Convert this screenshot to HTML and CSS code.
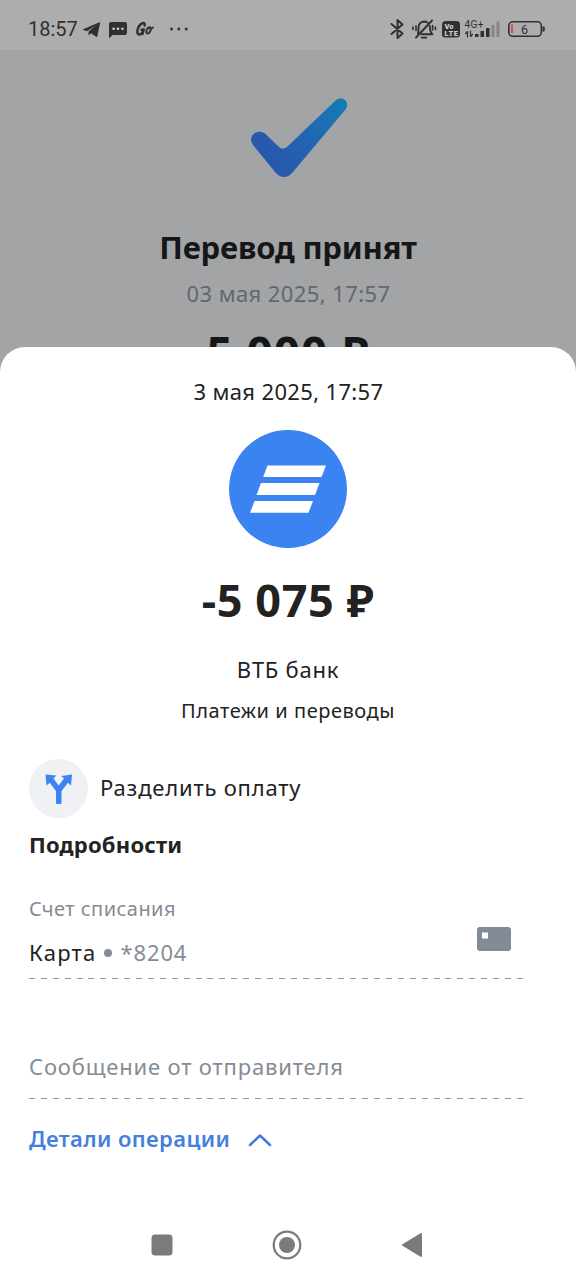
FILE: index.html
```html
<!DOCTYPE html>
<html lang="ru">
<head>
<meta charset="utf-8">
<title>Перевод принят</title>
<link rel="stylesheet" href="styles.css">
</head>
<body>
<div class="phone">
  <header class="status">
    <span class="clock">18:57</span>
    <svg class="status-left" width="110" height="24" viewBox="82 17 110 24">
      <path d="M82.5 29.5 L99.5 22.3 Q100.3 22 100.1 23 L97.3 36.3 Q97 37.5 96 36.8 L91 33.2 L88.5 35.6 L88.6 31.5 L95.5 25.8 L86.8 31.2 Z"/>
      <path d="M111 22 H125 Q127 22 127 24 V33 Q127 35 125 35 H112.5 L109 38.3 V24 Q109 22 111 22 Z"/>
      <g class="hole"><circle cx="113.6" cy="28.8" r="1.3"/><circle cx="118" cy="28.8" r="1.3"/><circle cx="122.4" cy="28.8" r="1.3"/></g>
      <path class="line" stroke-width="2.4" d="M144.5 25.5 Q145.5 22.5 142.5 23.2 Q138.5 25 137.4 30.5 Q137 35 140 34.5 Q142.5 33.5 143.8 29.5 L141.5 29.8 M143.8 29.5 L142.5 34"/>
      <path class="line" stroke-width="1.9" d="M149 27.500 Q146.5 28.5 146.300 32 Q146.5 34.5 149 33 Q151.5 30.5 150.5 28 Q150 26.800 149 27.5 M150.700 29 L153 27.5"/>
      <circle cx="171.5" cy="29" r="1.5"/><circle cx="178.8" cy="29" r="1.5"/><circle cx="186.2" cy="29" r="1.5"/>
    </svg>
    <svg class="status-right" width="160" height="26" viewBox="388 16 160 26">
      <path class="line" stroke-width="2" d="M391.5 24 L402.5 33.5 L397.5 38 V20 L402.5 24.5 L391.5 34"/>
      <g class="line" stroke-width="1.9"><path d="M416 37.5 L432 20.5 M418 33.5 Q418.5 32 418.5 28 Q418.5 22 424 21.5 Q426 21.5 427.5 22.5 M429.8 26 Q429.8 32 432.5 34.2 H421.5"/><path d="M421.5 37.6 H426.5 M416 26 V30.5 M412.9 27 V29.5 M432.6 25.5 V30 M435.4 27 V29.5" stroke-width="1.6"/></g>
      <rect x="442" y="21" width="18" height="16.5" rx="3.5"/>
      <text class="volte" x="444.5" y="29" textLength="9">Vo</text><text class="volte" x="444.5" y="35.5" textLength="13.5">LTE</text>
      <text class="net" x="464.5" y="28" textLength="19">4G+</text>
      <path class="line" stroke-width="1.2" d="M467.5 37 V31.5 L465.5 33.5 M470.5 31 V36.5 L472.5 34.5"/>
      <path d="M475 34 h3.5 v3 h-3.5z M480.5 31 h3.5 v6 h-3.5z M486 28 h3.5 v9 h-3.5z"/>
      <path class="dim" d="M491.5 25 h3 v12 h-3z M496.5 21.5 h3 v15.5 h-3z"/>
      <rect class="line" x="508.8" y="21.8" width="32.5" height="14.5" rx="4" stroke-width="1.6"/>
      <path d="M542.5 26.5 h1.2 q1 0 1 1 v3 q0 1 -1 1 h-1.2z"/>
      <rect class="low" x="511" y="24.5" width="2" height="8.5"/>
      <text class="pct" x="521" y="33.5">6</text>
    </svg>
  </header>
  <main class="receipt">
    <svg class="check" width="98" height="82" viewBox="250 97 98 82">
      <defs><linearGradient id="g" x1="251" y1="160" x2="347" y2="105" gradientUnits="userSpaceOnUse"><stop offset="0.15" stop-color="#2858ad"/><stop offset="0.55" stop-color="#2265b2"/><stop offset="1" stop-color="#147db3"/></linearGradient></defs>
      <path fill="url(#g)" d="M253 145 C247 137 256 128 265 133.5 L278 146 Q282.5 151.5 288 146 L335.5 100.5 C342 95 351 102 345.5 109.5 L292.5 172.5 Q284 181.5 275.5 172.5 Z"/>
    </svg>
    <h1 class="title">Перевод принят</h1>
    <p class="when">03 мая 2025, 17:57</p>
    <p class="sum">5 000 ₽</p>
  </main>
  <section class="sheet">
    <p class="date">3 мая 2025, 17:57</p>
    <svg class="logo" width="118" height="118" viewBox="229 430 118 118">
      <circle cx="288" cy="489" r="59" fill="#3b83f1"/>
      <path fill="#fff" d="M267.5 465.5 H326 L321.5 477 H263.2Z M261 483 H319.5 L315 495 H256.5Z M254.5 501 H313 L308.5 512.7 H250Z"/>
    </svg>
    <p class="amount">-5 075 ₽</p>
    <p class="bank">ВТБ банк</p>
    <p class="category">Платежи и переводы</p>
    <div class="split">
      <span class="split-icon"><svg width="30" height="32" viewBox="44 772 30 32"><path fill="#3b83f1" d="M45.5 773.5 L56.3 774.5 L53.5 777.5 L58.7 784.5 L64 777.5 L61.3 775 L72 773.5 L71 784.5 L68 781.7 L61.5 790 V802 Q61.5 803 60.5 803 H57 Q56 803 56 802 V790 L49.8 781.7 L46.5 784.5Z"/></svg></span>
      <span class="split-label">Разделить оплату</span>
    </div>
    <h2 class="heading">Подробности</h2>
    <div class="field account">
      <div>
        <p class="label">Счет списания</p>
        <p class="value"><span class="card-name">Карта</span><i class="dot"></i><span class="card-number">*8204</span></p>
      </div>
      <svg class="card" width="34" height="24"><rect width="34" height="24" rx="3" fill="#828c98"/><rect x="5" y="5.5" width="6" height="6" fill="#fff"/></svg>
    </div>
    <div class="field message"><p>Сообщение от отправителя</p></div>
    <div class="details"><span>Детали операции</span><svg width="24" height="14" viewBox="0 0 24 14"><path d="M2 12 L12 2.5 L22 12" fill="none" stroke="#447fe0" stroke-width="2.6" stroke-linecap="round" stroke-linejoin="round"/></svg></div>
  </section>
  <nav class="nav">
    <svg width="22" height="22"><rect x=".5" y=".5" width="21" height="21" rx="3.5" fill="#7b7b7b"/></svg>
    <svg width="30" height="30"><circle cx="15" cy="15" r="13.3" fill="none" stroke="#7b7b7b" stroke-width="2.2"/><circle cx="15" cy="15" r="8" fill="#7b7b7b"/></svg>
    <svg width="22" height="26"><path d="M2 13 L20 2 V24Z" fill="#7b7b7b" stroke="#7b7b7b" stroke-width="2" stroke-linejoin="round"/></svg>
  </nav>
</div>
</body>
</html>
```
FILE: styles.css
```css
* { box-sizing: border-box; margin: 0; padding: 0; }
body { background: #fff; font-family: "Noto Sans", "Open Sans", sans-serif; color: #222; }
svg { display: block; flex: none; }
.phone { width: 576px; height: 1280px; display: flex; flex-direction: column; overflow: hidden; background: #fff; }
.status { height: 50px; flex: none; display: flex; align-items: center; padding: 8px 28px 0; background: #adadad; font-family: Roboto, sans-serif; color: #303030; }
.clock { font-size: 20px; width: 54px; line-height: 24px; white-space: nowrap; }
.status svg { fill: #303030; }
.status-right { margin-left: auto; }
.status .hole { fill: #d0d0d0; }
.status .line { fill: none; stroke: #303030; stroke-linecap: round; stroke-linejoin: round; }
.status .dim { fill: #858585; }
.status .low { fill: #cf4f4c; }
.status .volte { fill: #ccc; font: 900 7.5px Roboto, sans-serif; }
.net { font: 10px Roboto, sans-serif; }
.pct { font: 12.5px Roboto, sans-serif; }
.receipt { height: 297px; flex: none; overflow: hidden; background: #a2a4a6; display: flex; flex-direction: column; align-items: center; padding-top: 47px; white-space: nowrap; }
.check { margin-left: 22px; }
.title { margin-top: 48px; font-size: 31px; line-height: 40px; font-weight: 700; letter-spacing: -0.2px; color: #151617; }
.when { margin-top: 11px; padding-left: 1px; font-size: 22px; line-height: 30px; letter-spacing: 0.4px; color: #62676d; }
.sum { margin-top: 14px; font-size: 46px; line-height: 60px; font-weight: 700; letter-spacing: 0.9px; color: #151617; }
.sheet { flex: none; height: 863px; background: #fff; border-radius: 25px 25px 0 0; padding: 29px 29px 0; box-shadow: 0 0 0 26px #a2a4a6; clip-path: inset(0); }
.date, .amount, .bank, .category { text-align: center; white-space: nowrap; }
.date { padding-left: 1px; font-size: 22px; line-height: 30px; letter-spacing: 0.35px; }
.logo { margin: 24px auto 0; }
.amount { margin-top: 22px; font-size: 45px; line-height: 60px; font-weight: 700; letter-spacing: 0.6px; }
.bank { margin-top: 24px; font-size: 22px; line-height: 30px; letter-spacing: 0.75px; }
.category { margin-top: 13px; font-size: 20px; line-height: 28px; letter-spacing: 0.55px; }
.split { display: flex; align-items: center; margin-top: 34px; height: 59px; gap: 12px; font-size: 22px; line-height: 30px; letter-spacing: 0.8px; }
.split-label { margin-top: -3px; }
.split-icon { width: 59px; height: 59px; border-radius: 50%; background: #eff1f4; display: grid; place-items: center; }
.heading { margin-top: 11px; font-size: 22px; line-height: 30px; font-weight: 700; letter-spacing: 0.2px; }
.field { width: 494px; background: repeating-linear-gradient(90deg, #999 0 6px, transparent 6px 11.9px) bottom / 100% 1px no-repeat; color: #858c94; }
.account { margin-top: 36px; height: 84px; display: flex; justify-content: space-between; }
.label { font-size: 20px; line-height: 28px; letter-spacing: 0.45px; }
.value { margin-top: 14px; display: flex; align-items: center; font-size: 22px; line-height: 30px; letter-spacing: 1.2px; }
.card-name { color: #222; }
.dot { width: 8px; height: 8px; border-radius: 50%; background: #828c98; margin: 1px 8px 0; }
.card-number { letter-spacing: 0.9px; }
.card { margin: 32px 12px 0 0; }
.message { margin-top: 72px; height: 48px; font-size: 22px; line-height: 30px; letter-spacing: 0.83px; }
.details { display: flex; align-items: center; gap: 18px; margin-top: 24px; font-size: 22px; line-height: 30px; font-weight: 600; letter-spacing: 0.4px; color: #447fe0; }
.details svg { margin-top: 3px; }
.nav { height: 70px; display: flex; align-items: center; justify-content: space-between; padding: 0 153px 0 151px; }
```
